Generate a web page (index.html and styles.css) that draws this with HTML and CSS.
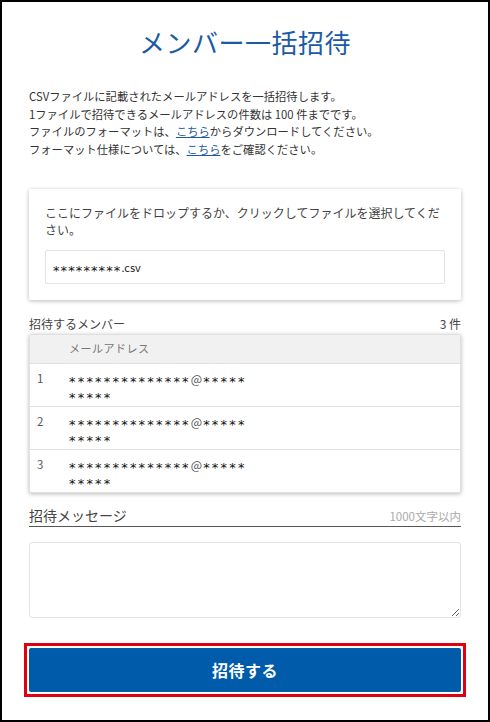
FILE: index.html
```html
<!DOCTYPE html>
<html lang="ja">
<head>
<meta charset="utf-8">
<link rel="stylesheet" href="styles.css">
</head>
<body>
<div class="page">
  <h1 class="title">メンバー一括招待</h1>
  <div class="desc">
    <p>CSVファイルに記載されたメールアドレスを一括招待します。</p>
    <p>1ファイルで招待できるメールアドレスの件数は 100 件までです。</p>
    <p>ファイルのフォーマットは、<a class="link" href="#">こちら</a>からダウンロードしてください。</p>
    <p>フォーマット仕様については、<a class="link" href="#">こちら</a>をご確認ください。</p>
  </div>
  <div class="drop card">
    <p class="drop-text">ここにファイルをドロップするか、クリックしてファイルを選択してください。</p>
    <div class="file-box"><span class="mask">*********</span>.csv</div>
  </div>
  <div class="members-head">
    <span>招待するメンバー</span>
    <span>3 件</span>
  </div>
  <div class="table card">
    <div class="row head"><span class="num"></span><span class="mail-head">メールアドレス</span></div>
    <div class="row"><span class="num">1</span><span class="mail"><span class="star">**************</span><span class="at">@</span><span class="star">*****</span><br><span class="star">*****</span></span></div>
    <div class="row"><span class="num">2</span><span class="mail"><span class="star">**************</span><span class="at">@</span><span class="star">*****</span><br><span class="star">*****</span></span></div>
    <div class="row"><span class="num">3</span><span class="mail"><span class="star">**************</span><span class="at">@</span><span class="star">*****</span><br><span class="star">*****</span></span></div>
  </div>
  <div class="msg-head">
    <span class="msg-label">招待メッセージ</span>
    <span class="msg-limit">1000文字以内</span>
  </div>
  <textarea class="msg"></textarea>
  <div class="btn-wrap">
    <button class="btn">招待する</button>
  </div>
</div>
</body>
</html>
```
FILE: styles.css
```css
* { box-sizing: border-box; }
html, body { margin: 0; padding: 0; }
body {
  width: 490px;
  height: 722px;
  border: 2px solid #000;
  background: #fff;
  font-family: "Noto Sans CJK JP", "Noto Sans", sans-serif;
  color: #333;
  overflow: hidden;
}
.page {
  padding: 0 27px;
  display: flex;
  flex-direction: column;
}
.title {
  margin: 20px 0 0;
  text-align: center;
  font-size: 26px;
  font-weight: 400;
  line-height: 40px;
  color: #1d5aa5;
  letter-spacing: 0.5px;
}
.desc {
  margin-top: 26px;
  font-size: 11.3px;
  line-height: 17.6px;
  color: #333;
}
.desc p { margin: 0; }
.link { color: #1d5aa5; text-decoration: underline; }
.card {
  background: #fff;
  box-shadow: 0 1px 4px rgba(0,0,0,0.28);
  border-radius: 2px;
}
.drop {
  margin-top: 31px;
  padding: 15px 16px 16px;
}
.drop-text {
  margin: 0;
  font-size: 12px;
  line-height: 17px;
  color: #444;
}
.file-box {
  margin-top: 12px;
  height: 34px;
  border: 1px solid #e3e3e3;
  border-radius: 2px;
  padding: 0 7px;
  font-size: 11px;
  line-height: 32px;
  color: #222;
}
.mask {
  font-family: "DejaVu Sans", sans-serif;
  font-size: 13px;
  letter-spacing: 1.1px;
  position: relative;
  top: 3px;
  color: #111;
}
.members-head {
  margin-top: 16px;
  display: flex;
  justify-content: space-between;
  font-size: 12px;
  line-height: 16px;
  color: #444;
}
.table {
  margin-top: 2px;
  border: 1px solid #e0e0e0;
}
.row {
  display: flex;
  height: 43px;
  padding-top: 7px;
  border-top: 1px solid #e0e0e0;
  font-size: 11.5px;
  line-height: 15px;
  color: #222;
}
.row.head {
  height: 28px;
  border-top: none;
  background: #f1f1f1;
  padding-top: 6px;
  color: #777;
  font-size: 11px;
}
.num { width: 39px; padding-left: 7px; color: #555; }
.mail {
  flex: 1;
  font-family: "DejaVu Sans", sans-serif;
  font-size: 11px;
  line-height: 15px;
}
.star {
  font-size: 13px;
  letter-spacing: 2.2px;
  color: #111;
  position: relative;
  top: 2px;
}
.at {
  font-family: "Noto Sans CJK JP", sans-serif;
  font-size: 12px;
  letter-spacing: 1px;
  color: #555;
}
.mail-head { flex: 1; letter-spacing: 0.5px; }
.msg-head {
  margin-top: 12px;
  display: flex;
  justify-content: space-between;
  align-items: flex-end;
  border-bottom: 1px solid #555;
  padding-bottom: 1px;
}
.msg-label { font-size: 14px; line-height: 20px; color: #444; }
.msg-limit { font-size: 11.5px; line-height: 18px; color: #aaa; }
.msg {
  margin: 15px 0 0;
  height: 76px;
  width: 100%;
  border: 1px solid #e3e3e3;
  border-radius: 3px;
  font-family: inherit;
  display: block;
}
.btn-wrap {
  margin: 25px -5px 0;
  border: 3px solid #e10010;
  padding: 2px;
}
.btn {
  display: block;
  width: 100%;
  height: 44px;
  background: #005bab;
  border: none;
  border-radius: 2px;
  color: #fff;
  font-family: inherit;
  font-size: 16px;
  font-weight: 700;
  letter-spacing: 0.5px;
}
```
